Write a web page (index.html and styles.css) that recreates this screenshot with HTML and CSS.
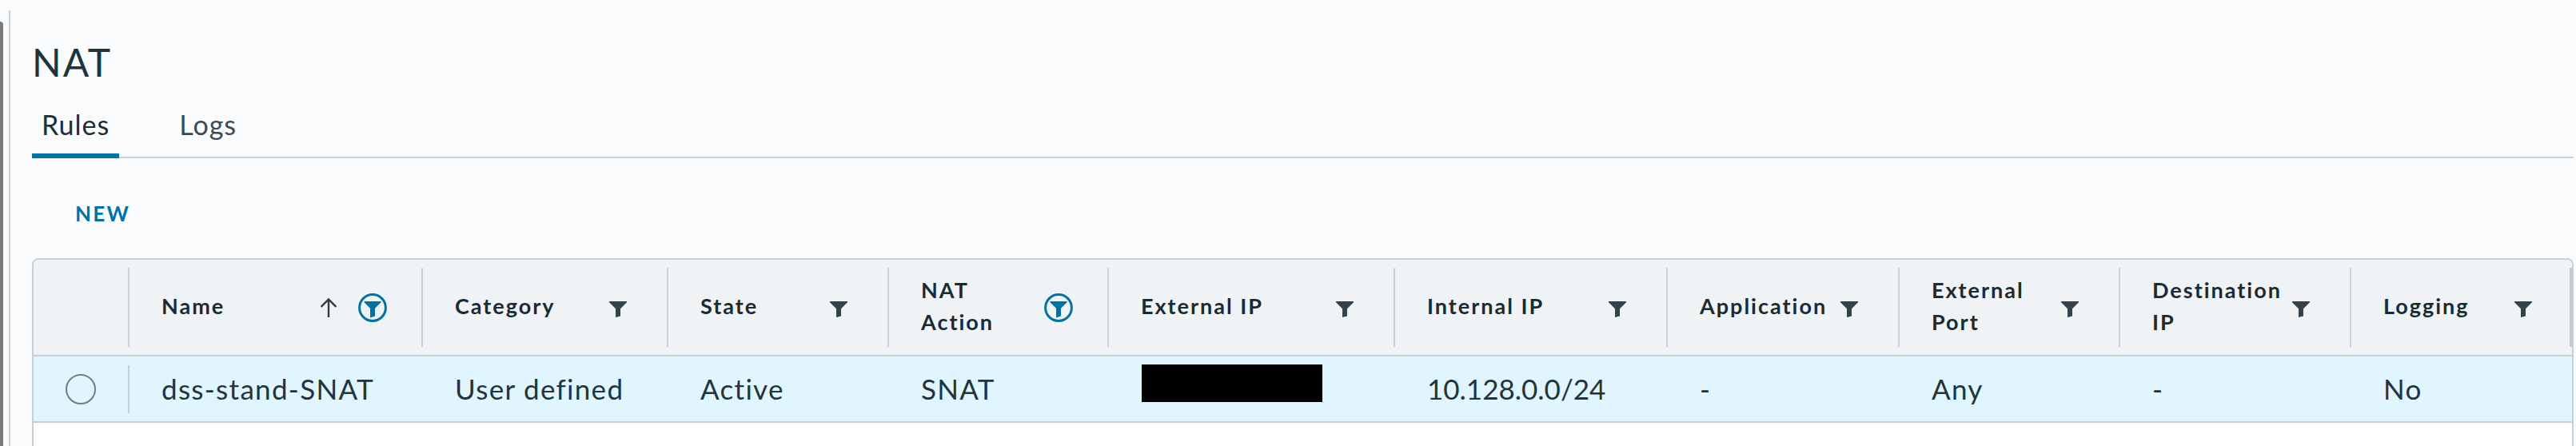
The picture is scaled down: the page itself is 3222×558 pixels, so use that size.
FILE: index.html
```html
<!DOCTYPE html>
<html lang="en">
<head>
<meta charset="utf-8">
<title>NAT</title>
<link rel="stylesheet" href="styles.css">
</head>
<body>
<div class="app">
  <div class="edge"><div class="edge-bar"></div></div>
  <div class="divider"></div>
  <main class="content">
    <h1 class="title">NAT</h1>
    <nav class="tabs">
      <a class="tab active">Rules</a>
      <a class="tab">Logs</a>
    </nav>
    <div class="toolbar"><button class="btn-new">NEW</button></div>
    <div class="grid">
      <div class="grid-head">
        <div class="hcell"></div>
        <div class="hcell">
          <div class="sep"></div>
          <div class="hlabel">Name</div>
          <svg class="sort" width="22" height="26" viewBox="0 0 22 26"><path d="M11 25V2.5M1.6 11.8L11 2.4l9.4 9.4" fill="none" stroke="#2f3d45" stroke-width="2.4"/></svg>
          <span class="filter"><svg width="36" height="36" viewBox="0 0 36 36"><circle cx="18" cy="18" r="16.4" fill="none" stroke="#0072a3" stroke-width="3"/><path d="M7.5 10H28.5V11.2L21 18.8V28.4L15 30.4V18.8L7.5 11.2Z" fill="#0072a3"/></svg></span>
        </div>
        <div class="hcell">
          <div class="sep"></div>
          <div class="hlabel">Category</div>
          <span class="filter"><svg class="funnel" width="22" height="20" viewBox="0 0 22 20"><path d="M0 0H22V1.2L14 9.2V18.4L8 20V9.2L0 1.2Z"/></svg></span>
        </div>
        <div class="hcell">
          <div class="sep"></div>
          <div class="hlabel">State</div>
          <span class="filter"><svg class="funnel" width="22" height="20" viewBox="0 0 22 20"><path d="M0 0H22V1.2L14 9.2V18.4L8 20V9.2L0 1.2Z"/></svg></span>
        </div>
        <div class="hcell">
          <div class="sep"></div>
          <div class="hlabel">NAT<br>Action</div>
          <span class="filter"><svg width="36" height="36" viewBox="0 0 36 36"><circle cx="18" cy="18" r="16.4" fill="none" stroke="#0072a3" stroke-width="3"/><path d="M7.5 10H28.5V11.2L21 18.8V28.4L15 30.4V18.8L7.5 11.2Z" fill="#0072a3"/></svg></span>
        </div>
        <div class="hcell">
          <div class="sep"></div>
          <div class="hlabel">External IP</div>
          <span class="filter"><svg class="funnel" width="22" height="20" viewBox="0 0 22 20"><path d="M0 0H22V1.2L14 9.2V18.4L8 20V9.2L0 1.2Z"/></svg></span>
        </div>
        <div class="hcell">
          <div class="sep"></div>
          <div class="hlabel">Internal IP</div>
          <span class="filter"><svg class="funnel" width="22" height="20" viewBox="0 0 22 20"><path d="M0 0H22V1.2L14 9.2V18.4L8 20V9.2L0 1.2Z"/></svg></span>
        </div>
        <div class="hcell">
          <div class="sep"></div>
          <div class="hlabel">Application</div>
          <span class="filter"><svg class="funnel" width="22" height="20" viewBox="0 0 22 20"><path d="M0 0H22V1.2L14 9.2V18.4L8 20V9.2L0 1.2Z"/></svg></span>
        </div>
        <div class="hcell">
          <div class="sep"></div>
          <div class="hlabel">External<br>Port</div>
          <span class="filter"><svg class="funnel" width="22" height="20" viewBox="0 0 22 20"><path d="M0 0H22V1.2L14 9.2V18.4L8 20V9.2L0 1.2Z"/></svg></span>
        </div>
        <div class="hcell">
          <div class="sep"></div>
          <div class="hlabel">Destination<br>IP</div>
          <span class="filter"><svg class="funnel" width="22" height="20" viewBox="0 0 22 20"><path d="M0 0H22V1.2L14 9.2V18.4L8 20V9.2L0 1.2Z"/></svg></span>
        </div>
        <div class="hcell">
          <div class="sep"></div>
          <div class="hlabel">Logging</div>
          <span class="filter filter-last"><svg class="funnel" width="22" height="20" viewBox="0 0 22 20"><path d="M0 0H22V1.2L14 9.2V18.4L8 20V9.2L0 1.2Z"/></svg></span>
          <div class="sep-end"></div>
        </div>
      </div>
      <div class="grid-row">
        <div class="rcell rcell-select"><span class="radio"></span></div>
        <div class="rcell rcell-name"><div class="rsep"></div><span class="rtext">dss-stand-SNAT</span></div>
        <div class="rcell">User defined</div>
        <div class="rcell">Active</div>
        <div class="rcell">SNAT</div>
        <div class="rcell rcell-redacted"><span class="redacted"></span></div>
        <div class="rcell rcell-num">10.128.0.0/24</div>
        <div class="rcell">-</div>
        <div class="rcell">Any</div>
        <div class="rcell">-</div>
        <div class="rcell">No</div>
      </div>
      <div class="grid-fill"></div>
    </div>
  </main>
</div>
</body>
</html>
```

FILE: styles.css
```css
html, body {
  margin: 0;
  height: 100%;
  overflow: hidden;
  background: #fafbfc;
}

body {
  font-family: Lato, "Noto Sans", sans-serif;
  color: #21333b;
}

.app {
  display: flex;
  height: 100vh;
}

.edge {
  width: 11px;
  flex: none;
  display: flex;
}

.edge-bar {
  width: 4px;
  margin-top: 27px;
  background: #7b7b7b;
  border-top-right-radius: 4px;
}

.divider {
  width: 2px;
  flex: none;
  margin-top: 13px;
  background: #cbd2d7;
}

.content {
  flex: 1;
  min-width: 0;
  padding: 0 3px 0 27px;
  display: flex;
  flex-direction: column;
}

.title {
  margin: 50px 0 0;
  font-size: 48px;
  line-height: 56px;
  font-weight: 400;
  letter-spacing: 2px;
  color: #21333b;
}

.tabs {
  display: flex;
  gap: 63px;
  margin-top: 26px;
  box-shadow: inset 0 -2px 0 #ccd3d8;
}

.tab {
  font-size: 34px;
  line-height: 48px;
  letter-spacing: 1px;
  padding: 0 12px 18px;
  color: #3c4a52;
}

.tab.active {
  color: #222c31;
  box-shadow: inset 0 -6px 0 #0072a3;
}

.toolbar {
  margin-top: 33px;
  height: 72px;
  display: flex;
  align-items: center;
}

.btn-new {
  margin-left: 54px;
  padding: 0;
  border: 0;
  background: none;
  font-family: Lato, "Noto Sans", sans-serif;
  font-weight: 700;
  font-size: 26px;
  line-height: 34px;
  letter-spacing: 2.2px;
  color: #0072a3;
}

.grid {
  margin-top: 20px;
  flex: 1;
  display: flex;
  flex-direction: column;
  border: 2px solid #c8d0d5;
  border-bottom: 0;
  border-radius: 8px 8px 0 0;
  background: #ffffff;
}

.grid-head,
.grid-row {
  display: grid;
  grid-template-columns: 118px 367px 307px 276px 275px 358px 341px 290px 276px 289px 1fr;
}

.grid-head {
  height: 119px;
  background: #eff3f6;
  border-bottom: 2px solid #c8d0d5;
  border-radius: 6px 6px 0 0;
}

.hcell {
  display: flex;
  align-items: center;
  min-width: 0;
}

.sep {
  width: 2px;
  height: 99px;
  flex: none;
  background: #cbd3d8;
}

.sep-end {
  width: 3px;
  height: 99px;
  flex: none;
  background: #c2cacf;
}

.hlabel {
  flex: 1;
  min-width: 0;
  padding: 0 0 4px 40px;
  font-weight: 700;
  font-size: 27px;
  line-height: 40px;
  letter-spacing: 2px;
  color: #1b2b32;
  white-space: nowrap;
}

.sort {
  flex: none;
  margin-right: 26px;
}

.filter {
  flex: none;
  width: 36px;
  height: 36px;
  margin-right: 43px;
  display: flex;
  align-items: center;
  justify-content: center;
}

.filter-last {
  margin-right: 40px;
}

.funnel {
  margin-top: 5px;
  fill: #34434b;
}

.grid-row {
  height: 81px;
  background: #e1f5fe;
  border-bottom: 2px solid #c8d0d5;
}

.rcell {
  padding-left: 42px;
  font-size: 35px;
  line-height: 81px;
  letter-spacing: 1.3px;
  color: #22343c;
  white-space: nowrap;
  min-width: 0;
}

.rcell-num {
  letter-spacing: 0;
}

.rcell-select {
  padding-left: 0;
  display: flex;
  align-items: center;
  justify-content: center;
}

.radio {
  width: 38px;
  height: 38px;
  box-sizing: border-box;
  border: 2px solid #737d83;
  border-radius: 50%;
}

.rcell-name {
  padding-left: 0;
  display: flex;
  align-items: center;
}

.rsep {
  width: 2px;
  height: 60px;
  flex: none;
  background: #c8d0d5;
}

.rtext {
  padding-left: 40px;
}

.rcell-redacted {
  padding-left: 43px;
  display: flex;
  align-items: center;
}

.redacted {
  width: 226px;
  height: 47px;
  margin-bottom: 14px;
  background: #000000;
}

.grid-fill {
  flex: 1;
}
```
